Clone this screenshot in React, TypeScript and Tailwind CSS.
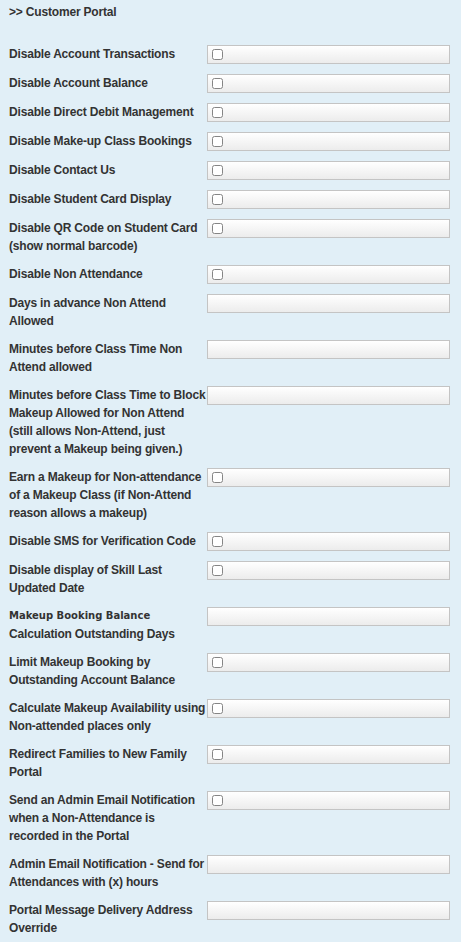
type Row = { lines: string[]; kind: 'check' | 'text'; alt?: boolean };

const rows: Row[] = [
  { lines: ['Disable Account Transactions'], kind: 'check' },
  { lines: ['Disable Account Balance'], kind: 'check' },
  { lines: ['Disable Direct Debit Management'], kind: 'check' },
  { lines: ['Disable Make-up Class Bookings'], kind: 'check' },
  { lines: ['Disable Contact Us'], kind: 'check' },
  { lines: ['Disable Student Card Display'], kind: 'check' },
  { lines: ['Disable QR Code on Student Card', '(show normal barcode)'], kind: 'check' },
  { lines: ['Disable Non Attendance'], kind: 'check' },
  { lines: ['Days in advance Non Attend', 'Allowed'], kind: 'text' },
  { lines: ['Minutes before Class Time Non', 'Attend allowed'], kind: 'text' },
  {
    lines: [
      'Minutes before Class Time to Block',
      'Makeup Allowed for Non Attend',
      '(still allows Non-Attend, just',
      'prevent a Makeup being given.)',
    ],
    kind: 'text',
  },
  {
    lines: ['Earn a Makeup for Non-attendance', 'of a Makeup Class (if Non-Attend', 'reason allows a makeup)'],
    kind: 'check',
  },
  { lines: ['Disable SMS for Verification Code'], kind: 'check' },
  { lines: ['Disable display of Skill Last', 'Updated Date'], kind: 'check' },
  { lines: ['Makeup Booking Balance', 'Calculation Outstanding Days'], kind: 'text', alt: true },
  { lines: ['Limit Makeup Booking by', 'Outstanding Account Balance'], kind: 'check' },
  { lines: ['Calculate Makeup Availability using', 'Non-attended places only'], kind: 'check' },
  { lines: ['Redirect Families to New Family', 'Portal'], kind: 'check' },
  {
    lines: ['Send an Admin Email Notification', 'when a Non-Attendance is', 'recorded in the Portal'],
    kind: 'check',
  },
  { lines: ['Admin Email Notification - Send for', 'Attendances with (x) hours'], kind: 'text' },
  { lines: ['Portal Message Delivery Address', 'Override'], kind: 'text' },
];

function Field({ kind }: { kind: Row['kind'] }) {
  return (
    <div className="w-[243px] h-[19px] shrink-0 border border-[#c4c4c4] bg-gradient-to-b from-white to-[#ececec] flex items-start">
      {kind === 'check' && (
        <span className="mt-[3px] ml-[4px] block w-[11px] h-[11px] rounded-[2.5px] border border-[#858585] bg-white" />
      )}
    </div>
  );
}

export default function App() {
  return (
    <div
      className="min-h-screen bg-[#e1eff7] text-[#333333] pl-[9px] pr-[11px] pt-[3px] pb-[6px] text-[12px] font-bold leading-[18px] tracking-[-0.18px]"
      style={{ fontFamily: '"Liberation Sans", Arial, sans-serif' }}
    >
      <div className="h-[18px]">&gt;&gt; Customer Portal</div>
      <div className="mt-[19px] flex flex-col">
        {rows.map((r, i) => (
          <div key={i} className="flex items-start py-[5px]">
            <div className="w-[198px] shrink-0">
              {r.lines.map((l, j) => (
                <div
                  key={j}
                  className={`whitespace-nowrap ${r.alt && j === 0 ? 'text-[10px] tracking-normal' : ''}`}
                  style={r.alt && j === 0 ? { fontFamily: '"DejaVu Sans", Verdana, sans-serif' } : undefined}
                >
                  {l}
                </div>
              ))}
            </div>
            <Field kind={r.kind} />
          </div>
        ))}
      </div>
    </div>
  );
}
